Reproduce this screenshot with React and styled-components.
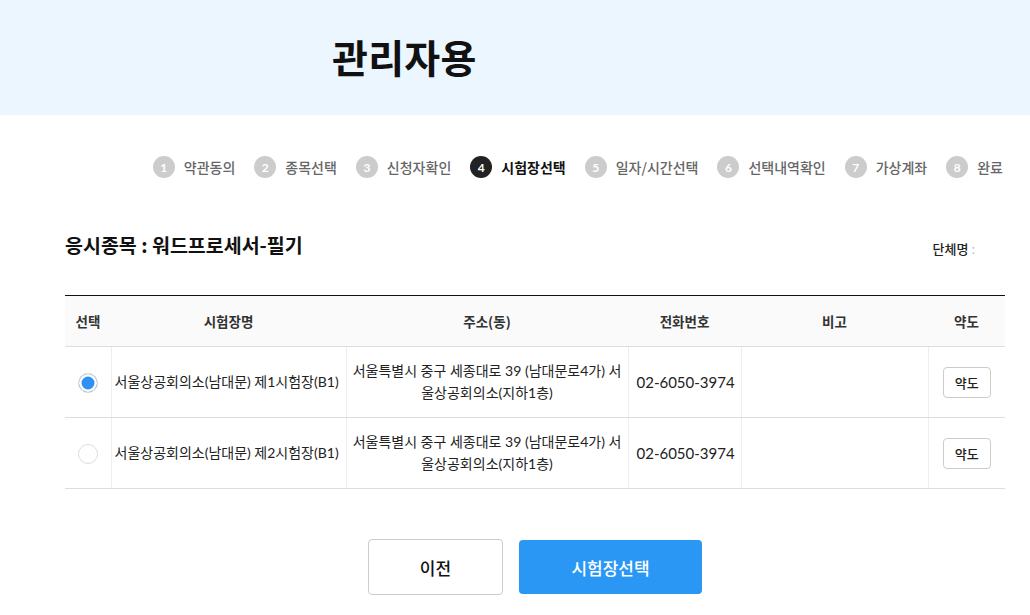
import React, { useState } from "react";
import styled, { createGlobalStyle } from "styled-components";

const GlobalStyle = createGlobalStyle`
  body {
    margin: 0;
    background: #fff;
    font-family: Lato, "Noto Sans CJK KR", sans-serif;
    color: #222;
  }
`;

const steps = ["약관동의", "종목선택", "신청자확인", "시험장선택", "일자/시간선택", "선택내역확인", "가상계좌", "완료"];
const ACTIVE = 3;

const sites = [
  {
    id: 1,
    name: "서울상공회의소(남대문) 제1시험장(B1)",
    address: "서울특별시 중구 세종대로 39 (남대문로4가) 서울상공회의소(지하1층)",
    phone: "02-6050-3974",
  },
  {
    id: 2,
    name: "서울상공회의소(남대문) 제2시험장(B1)",
    address: "서울특별시 중구 세종대로 39 (남대문로4가) 서울상공회의소(지하1층)",
    phone: "02-6050-3974",
  },
];

const App = () => {
  const [selected, setSelected] = useState(1);
  return (
    <>
      <GlobalStyle />
      <Header>
        <PageTitle>관리자용</PageTitle>
      </Header>
      <Main>
        <Steps>
          {steps.map((label, i) => (
            <Step key={label} $active={i === ACTIVE}>
              <StepNum $active={i === ACTIVE}>{i + 1}</StepNum>
              {label}
            </Step>
          ))}
        </Steps>
        <InfoRow>
          <Subject>응시종목 : 워드프로세서-필기</Subject>
          <Group>
            단체명<Colon> :</Colon>
          </Group>
        </InfoRow>
        <Table>
          <colgroup>
            <col style={{ width: 46 }} />
            <col style={{ width: 235 }} />
            <col style={{ width: 282 }} />
            <col style={{ width: 113 }} />
            <col style={{ width: 187 }} />
            <col style={{ width: 77 }} />
          </colgroup>
          <thead>
            <tr>
              <Th>선택</Th>
              <Th>시험장명</Th>
              <Th>주소(동)</Th>
              <Th>전화번호</Th>
              <Th>비고</Th>
              <Th>약도</Th>
            </tr>
          </thead>
          <tbody>
            {sites.map((s) => (
              <tr key={s.id}>
                <Td>
                  <Radio $checked={selected === s.id} onClick={() => setSelected(s.id)} />
                </Td>
                <Td $align="left" $nowrap>
                  {s.name}
                </Td>
                <Td>{s.address}</Td>
                <PhoneCell>{s.phone}</PhoneCell>
                <Td />
                <Td>
                  <MapButton>약도</MapButton>
                </Td>
              </tr>
            ))}
          </tbody>
        </Table>
        <Actions>
          <PrevButton>이전</PrevButton>
          <NextButton>시험장선택</NextButton>
        </Actions>
      </Main>
    </>
  );
};

const Header = styled.header`
  height: 115px;
  background: #ebf6ff;
  display: flex;
  align-items: center;
  padding-left: 332px;
`;

const PageTitle = styled.h1`
  margin: 0 0 3px;
  font-family: "Noto Sans CJK KR", sans-serif;
  font-size: 39px;
  font-weight: 700;
  color: #111;
  letter-spacing: 0.3px;
`;

const Main = styled.main`
  padding: 0 25px 40px 65px;
`;

const Steps = styled.ol`
  list-style: none;
  margin: 0;
  padding: 41px 2px 0 0;
  display: flex;
  justify-content: flex-end;
  gap: 19px;
`;

const Step = styled.li`
  display: flex;
  align-items: center;
  gap: 9px;
  font-family: "Noto Sans CJK KR", sans-serif;
  font-size: 14px;
  font-weight: ${(p) => (p.$active ? 700 : 500)};
  color: ${(p) => (p.$active ? "#111" : "#666")};
  height: 22px;
`;

const StepNum = styled.span`
  width: 22px;
  height: 22px;
  border-radius: 50%;
  background: ${(p) => (p.$active ? "#222" : "#ccc")};
  color: #fff;
  font-family: Lato, sans-serif;
  font-size: 12px;
  font-weight: 700;
  display: flex;
  align-items: center;
  justify-content: center;
`;

const InfoRow = styled.div`
  display: flex;
  justify-content: space-between;
  align-items: center;
  margin-top: 46px;
  height: 40px;
`;

const Subject = styled.h2`
  margin: 0;
  font-family: "Noto Sans CJK KR", sans-serif;
  font-size: 19.5px;
  font-weight: 700;
  color: #111;
`;

const Group = styled.div`
  font-family: "Noto Sans CJK KR", sans-serif;
  font-size: 13px;
  font-weight: 500;
  color: #222;
  margin-right: 30px;
  padding-top: 8px;
`;

const Colon = styled.span`
  color: #bbb;
  font-weight: 400;
`;

const Table = styled.table`
  width: 100%;
  margin-top: 31px;
  border-collapse: collapse;
  table-layout: fixed;
  border-top: 1px solid #111;
  font-size: 14px;
`;

const Th = styled.th`
  height: 50px;
  padding: 0;
  background: #fafafa;
  border-bottom: 1px solid #ddd;
  font-family: "Noto Sans CJK KR", sans-serif;
  font-weight: 700;
  font-size: 13.5px;
  color: #333;
`;

const Td = styled.td`
  height: 70px;
  padding: 0 ${(p) => (p.$nowrap ? "2px 0 3px" : "6px")};
  border-bottom: 1px solid #ddd;
  border-left: 1px solid #eee;
  text-align: ${(p) => p.$align || "center"};
  white-space: ${(p) => (p.$nowrap ? "nowrap" : "normal")};
  color: #222;
  line-height: 22px;
  &:first-child {
    border-left: none;
  }
`;

const PhoneCell = styled(Td)`
  text-align: left;
  padding: 0 0 0 8px;
  white-space: nowrap;
  font-size: 15px;
`;

const Radio = styled.span`
  display: inline-block;
  width: 20px;
  height: 20px;
  border-radius: 50%;
  border: 1px solid #ddd;
  box-sizing: border-box;
  vertical-align: middle;
  background: ${(p) => (p.$checked ? "#2f91f4" : "#fff")};
  box-shadow: ${(p) => (p.$checked ? "inset 0 0 0 2.5px #fff" : "none")};
  cursor: pointer;
`;

const MapButton = styled.button`
  width: 48px;
  height: 31px;
  border: 1px solid #ccc;
  border-radius: 4px;
  background: #fff;
  font-family: "Noto Sans CJK KR", sans-serif;
  font-size: 13px;
  font-weight: 500;
  color: #222;
  cursor: pointer;
`;

const Actions = styled.div`
  display: flex;
  justify-content: center;
  align-items: center;
  gap: 16px;
  margin-top: 50px;
`;

const PrevButton = styled.button`
  width: 135px;
  height: 56px;
  border: 1px solid #ccc;
  border-radius: 4px;
  background: #fff;
  font-family: "Noto Sans CJK KR", sans-serif;
  font-size: 17px;
  font-weight: 500;
  color: #111;
`;

const NextButton = styled.button`
  width: 183px;
  height: 54px;
  border: none;
  border-radius: 4px;
  background: #2b97f5;
  font-family: "Noto Sans CJK KR", sans-serif;
  font-size: 17px;
  font-weight: 500;
  color: #fff;
`;

export default App;
